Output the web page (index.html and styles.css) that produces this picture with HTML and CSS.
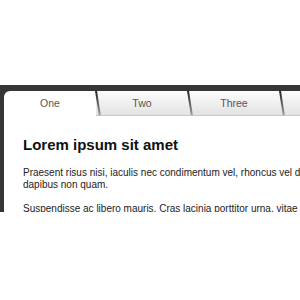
FILE: index.html
```html
<!DOCTYPE html>
<html lang="en">
<head>
    <meta charset="UTF-8">
    <title>Tabs</title>
    <link rel="stylesheet" href="styles.css">
</head>
<body>
    <div class="page">
        <div class="widget">
            <ul class="tabs">
                <li class="active">One</li>
                <li>Two</li>
                <li>Three</li>
                <li>Four</li>
            </ul>
            <div class="panel">
                <h2>Lorem ipsum sit amet</h2>
                <p>Praesent risus nisi, iaculis nec condimentum vel, rhoncus vel dolor. Aenean nisi lectus, vehicula at dapibus non quam.</p>
                <p>Suspendisse ac libero mauris. Cras lacinia porttitor urna, vitae molestie libero posuere et.</p>
            </div>
        </div>
    </div>
</body>
</html>
```

FILE: styles.css
```css
* {
    margin: 0;
    padding: 0;
    box-sizing: border-box;
    font-family: "Liberation Sans", Arial, sans-serif;
}

body {
    background-color: #fff;
}

.page {
    width: 300px;
    height: 300px;
    padding-top: 85px;
    overflow: hidden;
}

.widget {
    width: 500px;
    height: 127px;
    background-color: #363636;
    padding: 6px 0 0 4px;
    overflow: hidden;
}

.tabs {
    display: flex;
    list-style: none;
    height: 25px;
}

.tabs li {
    position: relative;
    width: 92px;
    line-height: 25px;
    text-align: center;
    font-size: 10.5px;
    color: #555;
    background: linear-gradient(#fdfdfd, #e2e2e2);
    border-bottom: 1px solid #c8c8c8;
}

.tabs li::after {
    content: "";
    position: absolute;
    top: 0;
    bottom: 0;
    right: -1px;
    width: 2px;
    background: linear-gradient(#222, #999);
    transform: skewX(9deg);
    transform-origin: top;
    z-index: 1;
}

.tabs li.active {
    background: #fff;
    border-bottom-color: #fff;
    border-top-left-radius: 6px;
}

.panel {
    background-color: #fff;
    height: 100%;
    padding: 20px 19px;
}

.panel h2 {
    font-size: 15px;
    color: #111;
    margin-bottom: 14px;
}

.panel p {
    font-size: 10px;
    line-height: 12px;
    color: #222;
    margin-bottom: 12px;
}
```
